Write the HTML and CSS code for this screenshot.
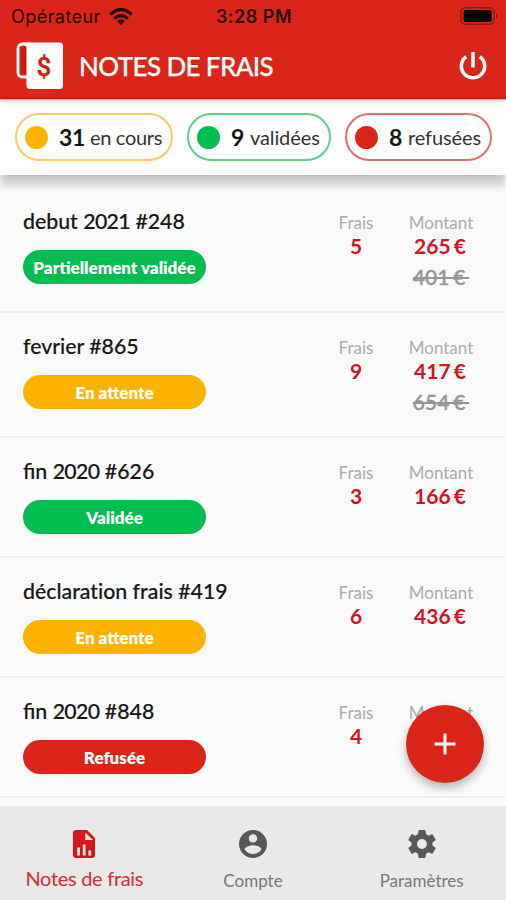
FILE: index.html
```html
<!DOCTYPE html>
<html lang="fr">
<head>
<meta charset="utf-8">
<title>Notes de frais</title>
<link rel="stylesheet" href="styles.css">
</head>
<body>
<div class="app">
  <header class="header">
    <div class="status">
      <div class="carrier"><span>Opérateur</span>
        <svg class="wifi" viewBox="0 0 24 18"><g fill="none" stroke="currentColor" stroke-width="3.2"><path d="M1.2 6.5Q12-3.1 22.8 6.5"/><path d="M5.2 10.6Q12 4.6 18.8 10.6"/></g><path d="M8.2 13Q12 9.7 15.8 13L12 17.2z" fill="currentColor"/></svg>
      </div>
      <span class="time">3:28 PM</span>
      <svg class="battery" viewBox="0 0 38 18"><rect x="1" y=".8" width="33" height="16.4" rx="4.5" fill="none" stroke="#8f170f" stroke-width="1.4"/><rect x="3.6" y="3" width="28" height="12" rx="2" fill="#000"/><path d="M36 6.2q2.6 2.8 0 5.6z" fill="#8f170f"/></svg>
    </div>
    <div class="titlebar">
      <div class="logo">
        <svg viewBox="0 0 48 48"><path d="M11 35H6.500Q2 35 2 30.500V7Q2 2 7 2H14" fill="none" stroke="#fff" stroke-width="2.800"/><path d="M5 6Q7.500 2.500 10 6V31.500H5z" fill="#c71a12"/><path d="M6 .5H43.500Q47 .5 47 4V43.500Q47 47 43.500 47H14Q10.500 47 10.500 43.500V6Q10.500 3 6 3z" fill="#fff"/></svg>
        <span class="dollar">$</span>
      </div>
      <h1>NOTES DE FRAIS</h1>
      <svg class="power" viewBox="0 0 28 28"><g fill="none" stroke="#fff" stroke-width="3.500"><path d="M14 0V15.500"/><path d="M7.200 4.600A11.700 11.700 0 1 0 20.800 4.600"/></g></svg>
    </div>
  </header>
  <section class="filters">
    <div class="chip amber"><i></i><b>31</b><span>en cours</span></div>
    <div class="chip green"><i></i><b>9</b><span>validées</span></div>
    <div class="chip red"><i></i><b>8</b><span>refusées</span></div>
  </section>
  <main class="list">
    <article class="row tall"><div class="report"><h2>debut <span class="year">2021</span> #248</h2><div class="tag green">Partiellement validée</div></div><div class="stat count"><span>Frais</span><b>5</b></div><div class="stat amount"><span>Montant</span><b>265 €</b><s>401 €&nbsp;</s></div></article>
    <article class="row tall"><div class="report"><h2>fevrier #865</h2><div class="tag amber">En attente</div></div><div class="stat count"><span>Frais</span><b>9</b></div><div class="stat amount"><span>Montant</span><b>417 €</b><s>654 €&nbsp;</s></div></article>
    <article class="row"><div class="report"><h2>fin <span class="year">2020</span> #626</h2><div class="tag green">Validée</div></div><div class="stat count"><span>Frais</span><b>3</b></div><div class="stat amount"><span>Montant</span><b>166 €</b></div></article>
    <article class="row"><div class="report"><h2 class="no-liga">déclaration frais #419</h2><div class="tag amber">En attente</div></div><div class="stat count"><span>Frais</span><b>6</b></div><div class="stat amount"><span>Montant</span><b>436 €</b></div></article>
    <article class="row"><div class="report"><h2>fin <span class="year">2020</span> #848</h2><div class="tag red">Refusée</div></div><div class="stat count"><span>Frais</span><b>4</b></div><div class="stat amount"><span>Montant</span></div></article>
  </main>
  <button class="fab" aria-label="Ajouter"><svg viewBox="0 0 22 22"><path d="M11 .5V21.500M.5 11H21.500" stroke="#fff" stroke-width="3"/></svg></button>
  <nav class="tabs">
    <a class="tab active"><svg viewBox="0 0 28 28"><path d="M6 0H17L25 8V25Q25 28 22 28H6Q3 28 3 25V3Q3 0 6 0z" fill="currentColor"/><path d="M15.300 2.500V10H23z" fill="#e9e9e9"/><path d="M7.200 17.500H10V25.500H7.200zM12.800 14.500H15.600V25.500H12.800zM18.400 20.500H21.200V25.500H18.400z" fill="#e9e9e9"/></svg><span>Notes de frais</span></a>
    <a class="tab"><svg viewBox="2 2 20 20"><path fill="currentColor" d="M12 2C6.480 2 2 6.480 2 12s4.480 10 10 10 10-4.480 10-10S17.520 2 12 2zm0 3c1.660 0 3 1.340 3 3s-1.340 3-3 3-3-1.340-3-3 1.340-3 3-3zm0 14.200c-2.500 0-4.710-1.280-6-3.220.03-1.990 4-3.080 6-3.080 1.990 0 5.970 1.090 6 3.080-1.290 1.940-3.500 3.220-6 3.220z"/></svg><span>Compte</span></a>
    <a class="tab"><svg viewBox="2 2 20 20"><path fill="currentColor" d="M19.430 12.980c.04-.32.07-.64.07-.98s-.03-.66-.07-.98l2.110-1.650c.19-.15.24-.42.12-.64l-2-3.460c-.12-.22-.39-.3-.61-.22l-2.490 1c-.52-.4-1.080-.73-1.690-.98l-.38-2.650C14.460 2.180 14.250 2 14 2h-4c-.25 0-.46.18-.49.42l-.38 2.650c-.61.25-1.170.59-1.690.98l-2.490-1c-.23-.09-.49 0-.61.22l-2 3.460c-.13.22-.07.49.12.64l2.110 1.650c-.04.32-.07.65-.07.98s.03.66.07.98l-2.110 1.650c-.19.15-.24.42-.12.64l2 3.460c.12.22.39.3.61.22l2.490-1c.52.4 1.080.73 1.690.98l.38 2.650c.03.24.24.42.49.42h4c.25 0 .46-.18.49-.42l.38-2.650c.61-.25 1.170-.59 1.690-.98l2.490 1c.23.09.49 0 .61-.22l2-3.460c.12-.22.07-.49-.12-.64l-2.110-1.650zM12 15.500c-1.930 0-3.500-1.570-3.500-3.500s1.570-3.500 3.500-3.500 3.500 1.570 3.500 3.500-1.570 3.500-3.500 3.500z"/></svg><span>Paramètres</span></a>
  </nav>
</div>
</body>
</html>
```

FILE: styles.css
```css
* { box-sizing: border-box; }
body { margin: 0; font-family: Lato, "Liberation Sans", sans-serif; color: #161616; background: #fafafa; }
.app { position: relative; width: 506px; height: 900px; overflow: hidden; display: flex; flex-direction: column; }
svg { display: block; flex: none; }
h1, h2 { margin: 0; font-weight: 500; white-space: nowrap; }

.header { flex: none; height: 100px; background: #d92619; border-bottom: 1px solid #f0a0a0; box-shadow: inset 0 -2px #cf1710, 0 1px 5px rgba(0,0,0,.2); position: relative; z-index: 3; }
.status { height: 34px; display: grid; grid-template-columns: 1fr auto 1fr; align-items: center; padding: 0 8px 0 11px; font: 18px/22px Inter, "Liberation Sans", sans-serif; color: #2d0805; }
.carrier { display: flex; align-items: center; gap: 8px; letter-spacing: .45px; }
.wifi { width: 24px; height: 18px; color: #240503; }
.time { font-weight: 600; letter-spacing: .5px; margin-left: -1px; }
.battery { width: 38px; height: 18px; justify-self: end; margin-top: -2px; }
.titlebar { display: flex; align-items: center; height: 64px; padding: 0 19px 0 16px; }
.logo { position: relative; width: 48px; height: 48px; }
.logo svg { width: 48px; height: 48px; }
.dollar { position: absolute; left: 18px; top: 10px; width: 20px; text-align: center; font: 500 26px/30px Roboto, sans-serif; color: #d31d14; -webkit-text-stroke: .4px #d31d14; }
h1 { margin-left: 15px; font-size: 26px; line-height: 32px; color: #fff; flex: 1; letter-spacing: -.62px; -webkit-text-stroke: .25px #fff; }
.power { width: 28px; height: 28px; }

.filters { flex: none; height: 75px; display: flex; gap: 14px; padding: 13px 13px 0 15px; background: #fff; box-shadow: 0 13px 5px -1px rgba(0,0,0,.09), 0 4px 12px rgba(0,0,0,.2); position: relative; z-index: 2; }
.chip { height: 48px; display: flex; align-items: center; border: 2px solid; border-radius: 24px; padding-left: 8px; font-size: 20px; white-space: nowrap; }
.chip i { width: 23px; height: 23px; border-radius: 50%; margin-right: 11px; }
.chip b { font-size: 23px; font-weight: 700; margin-right: 6px; color: #161616; letter-spacing: -.4px; }
.chip span { color: #333; letter-spacing: -.1px; }
.chip.amber { width: 158px; border-color: #fbc767; }
.chip.amber b { margin-right: 5px; }
.chip.amber span { letter-spacing: -.3px; }
.chip.green { width: 144px; border-color: #5dce8c; }
.chip.red { width: 147px; border-color: #df716a; }
.chip.amber i, .tag.amber { background: #ffb300; }
.chip.green i, .tag.green { background: #00bd50; }
.chip.red i, .tag.red { background: #d92619; }

.list { flex: 1; min-height: 0; padding-top: 13px; }
.row { height: 120px; display: flex; padding: 18px 23px 0; border-bottom: 2px solid #eee; }
.row.tall { height: 125px; }
.report { flex: 1; }
h2 { font-size: 21.300px; line-height: 30px; -webkit-text-stroke: .15px #161616; }
.year { letter-spacing: -.65px; }
.no-liga { font-variant-ligatures: none; }
.tag { margin-top: 14px; width: 183px; height: 34px; border-radius: 17px; color: #fff; font-size: 17px; font-weight: 800; line-height: 36px; text-align: center; white-space: nowrap; }
.stat { display: flex; flex-direction: column; align-items: center; padding-top: 7px; white-space: nowrap; }
.count { width: 60px; margin-right: 20px; }
.amount { width: 70px; margin-right: 7px; }
.stat span { font-size: 17px; line-height: 20px; color: #aaa; }
.stat b { font-size: 21px; font-weight: 700; line-height: 26px; color: #d4141a; word-spacing: -2px; }
.amount b { margin-right: 2px; }
.stat s { font-size: 21px; font-weight: 500; line-height: 36px; color: #959595; word-spacing: -1.500px; -webkit-text-stroke: .4px #959595; }

.fab { position: absolute; z-index: 4; left: 406px; top: 705px; width: 78px; height: 78px; padding: 28px; border: 0; border-radius: 50%; background: #d92619; box-shadow: 0 5px 10px rgba(0,0,0,.28); }
.fab svg { width: 22px; height: 22px; }

.tabs { flex: none; height: 94px; display: grid; grid-template-columns: repeat(3, 1fr); background: #e9e9e9; position: relative; }
.tab { display: flex; flex-direction: column; align-items: center; padding-top: 24px; color: #585858; font-size: 17px; }
.tab svg { width: 28px; height: 28px; }
.tab span { margin-top: 11px; line-height: 24px; color: #777; white-space: nowrap; }
.tab.active { color: #d8161a; }
.tab.active span { color: #d82c2c; font-size: 20px; margin-top: 8px; letter-spacing: -.3px; }
```
